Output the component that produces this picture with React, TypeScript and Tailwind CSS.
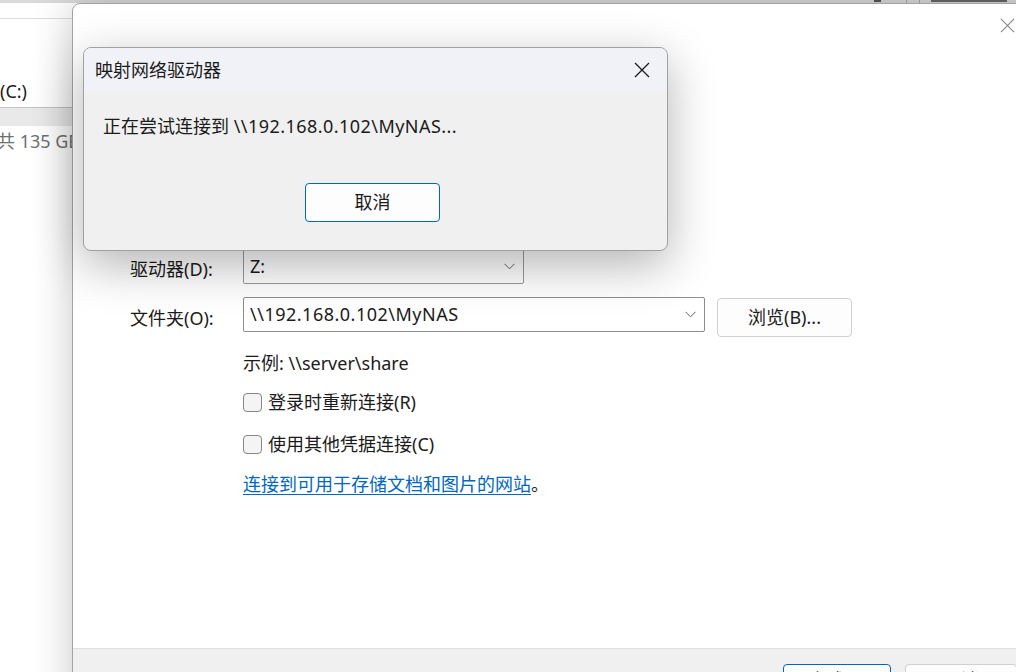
import React from 'react';

const font = { fontFamily: '"Noto Sans", "Noto Sans CJK SC", sans-serif' };

function Chevron() {
  return (
    <svg width="11" height="7" viewBox="0 0 11 7" className="shrink-0">
      <path d="M0.5 0.8 L5.5 5.8 L10.5 0.8" fill="none" stroke="#5f5f5f" strokeWidth="1" />
    </svg>
  );
}

function CloseX({ size = 16, color = '#1a1a1a' }: { size?: number; color?: string }) {
  return (
    <svg width={size} height={size} viewBox="0 0 16 16">
      <path d="M1 1 L15 15 M15 1 L1 15" stroke={color} strokeWidth="1.3" fill="none" />
    </svg>
  );
}

function Checkbox({ label }: { label: string }) {
  return (
    <div className="flex items-center h-[24px] gap-[6px]">
      <div className="w-[19px] h-[19px] rounded-[4px] border border-[#878787] bg-[#f4f4f4]" />
      <span>{label}</span>
    </div>
  );
}

export default function App() {
  return (
    <div className="relative w-[1016px] h-[672px] overflow-hidden bg-white text-[18px] text-[#1b1b1b]" style={font}>
      {/* explorer behind */}
      <div className="absolute inset-0 flex flex-col">
        <div className="h-[3px] bg-[#d9d9d9] relative">
          <div className="absolute left-[874px] top-0 w-[7px] h-[2px] bg-[#555]" />
          <div className="absolute left-[906px] top-0 w-px h-[3px] bg-[#aaa]" />
          <div className="absolute left-[919px] top-0 w-px h-[3px] bg-[#aaa]" />
          <div className="absolute left-[931px] top-0 w-[76px] h-[2px] bg-[#666]" />
        </div>
        <div className="h-[15px]" />
        <div className="h-px w-[72px] bg-[#dedede]" />
        <div className="h-[60px]" />
        <div className="w-[72px] h-[24px] leading-[24px] whitespace-nowrap">(C:)</div>
        <div className="h-[4px]" />
        <div className="w-[72px] h-[19px] border-t border-[#c4c4c4] bg-[#e9e9e9]" />
        <div className="w-[72px] h-[24px] leading-[24px] whitespace-nowrap text-[#707070] -ml-[3px] mt-[3px]">共 135 GB</div>
      </div>

      {/* map network drive window */}
      <div className="absolute left-[72px] top-[3px] w-[980px] h-[740px] rounded-tl-[8px] border border-[#a3a3a3] bg-white shadow-[0_0_40px_rgba(0,0,0,0.22)] flex flex-col">
        <div className="h-[644px] flex flex-col">
          <div className="h-[42px] flex items-center pl-[927px]">
            <CloseX size={15} color="#8a8a8a" />
          </div>
          <div className="h-[203px]" />
          <div className="pl-[57px] flex flex-col">
            <div className="flex items-center h-[35px]">
              <span className="w-[113px] pt-[6px]">驱动器(D):</span>
              <div className="w-[281px] h-[35px] border border-[#9a9a9a] rounded-[2px] flex items-center justify-between pl-[6px] pr-[8px]">
                <span>Z:</span>
                <Chevron />
              </div>
            </div>
            <div className="flex items-start mt-[13px]">
              <span className="w-[113px] h-[35px] leading-[42px]">文件夹(O):</span>
              <div className="w-[462px] h-[35px] border border-[#8d8d8d] rounded-[2px] flex items-center justify-between pl-[6px] pr-[8px]">
                <span className="tracking-[0.5px]">\\192.168.0.102\MyNAS</span>
                <Chevron />
              </div>
              <button className="ml-[12px] mt-px w-[135px] h-[39px] rounded-[4px] border border-[#d0d0d0] bg-[#fdfdfd]">浏览(B)...</button>
            </div>
            <div className="pl-[113px] flex flex-col">
              <div className="h-[24px] leading-[24px] mt-[14px]">示例: \\server\share</div>
              <div className="mt-[15px]">
                <Checkbox label="登录时重新连接(R)" />
              </div>
              <div className="mt-[18px]">
                <Checkbox label="使用其他凭据连接(C)" />
              </div>
              <div className="h-[24px] leading-[24px] mt-[16px]">
                <span className="text-[#0067c0] underline underline-offset-[3px]">连接到可用于存储文档和图片的网站</span>。
              </div>
            </div>
          </div>
        </div>
        <div className="flex-1 border-t border-[#dfdfdf] bg-[#f0f0f0] flex items-start pt-[15px] pl-[710px] gap-[14px]">
          <button className="w-[108px] h-[32px] rounded-[4px] border border-[#0067c0] bg-[#fdfdfd]">完成(F)</button>
          <button className="w-[112px] h-[32px] rounded-[4px] border border-[#d0d0d0] bg-[#fdfdfd]">取消</button>
        </div>
      </div>

      {/* progress dialog */}
      <div className="absolute left-[83px] top-[47px] w-[585px] h-[204px] rounded-[8px] border border-[#a0a0a0] overflow-hidden bg-[#f0f0f0] shadow-[0_14px_48px_rgba(0,0,0,0.3)] flex flex-col">
        <div className="h-[44px] bg-[#f0f2f8] flex items-center justify-between pl-[11px] pr-[17px]">
          <span>映射网络驱动器</span>
          <CloseX size={16} />
        </div>
        <div className="flex flex-col pl-[19px] pt-[22px]">
          <div className="h-[24px] leading-[24px]">
            正在尝试连接到 <span className="tracking-[0.45px]">\\192.168.0.102\MyNAS...</span>
          </div>
          <button className="mt-[45px] ml-[202px] w-[135px] h-[39px] rounded-[4px] border border-[#0067c0] bg-[#fdfdfd]">取消</button>
        </div>
      </div>
    </div>
  );
}
